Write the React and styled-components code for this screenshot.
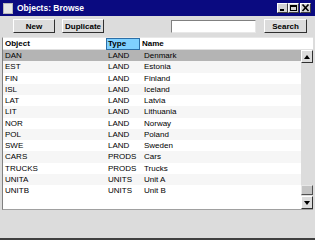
import React from "react";
import styled, { createGlobalStyle } from "styled-components";

const Global = createGlobalStyle`
  html, body { margin: 0; padding: 0; background: #dcdcdc; }
  * { box-sizing: border-box; }
`;

const Window = styled.div`
  width: 315px;
  height: 240px;
  display: flex;
  flex-direction: column;
  background: #dcdcdc;
  border-bottom: 2px solid #404040;
  font-family: "Liberation Sans", Arial, sans-serif;
  font-size: 8px;
  color: #000;
`;

const TitleBar = styled.div`
  height: 16px;
  background: #0a0a80;
  display: flex;
  align-items: center;
  padding: 0 4px 0 3px;
  gap: 4px;
`;

const AppIcon = styled.div`
  width: 10px;
  height: 11px;
  background: #e6e6e6;
  border: 1px solid #b8b8b8;
`;

const Title = styled.div`
  flex: 1;
  color: #fff;
  font-weight: bold;
  font-size: 8.5px;
`;

const TitleButtons = styled.div`
  display: flex;
`;

const TitleButton = styled.div`
  width: 11px;
  height: 10px;
  margin-left: ${(p) => p.ml || 0}px;
  background: #d4d4d4;
  border: 1px solid;
  border-color: #fff #404040 #404040 #fff;
  display: flex;
  align-items: center;
  justify-content: center;
`;

const Toolbar = styled.div`
  height: 20px;
  display: flex;
  align-items: center;
  padding: 0 8px 0 13px;
`;

const Button = styled.div`
  width: ${(p) => p.w}px;
  height: 14px;
  margin-right: ${(p) => p.mr || 0}px;
  background: #dcdcdc;
  border: 1px solid;
  border-color: #fff #303030 #303030 #fff;
  display: flex;
  align-items: center;
  justify-content: center;
  font-weight: bold;
  font-size: 8px;
`;

const SearchField = styled.div`
  width: 85px;
  height: 13px;
  background: #fff;
  border: 1px solid;
  border-color: #808080 #e8e8e8 #e8e8e8 #808080;
  margin: 0 8px 0 auto;
`;

const ListPanel = styled.div`
  margin: 1px 2px 0 2px;
  height: 173px;
  display: flex;
  flex-direction: column;
  background: #fff;
  border-left: 1px solid #808080;
  border-bottom: 1px solid #a0a0a0;
  border-top: 1px solid #e8e8e8;
  overflow: hidden;
`;

const HeaderRow = styled.div`
  display: flex;
  height: 12px;
  align-items: center;
  font-weight: bold;
  font-size: 8px;
  border-bottom: 1px solid #e0e0e0;
`;

const HeadCell = styled.div`
  width: ${(p) => p.w}px;
  height: 12px;
  padding-left: 2px;
  line-height: 11px;
  ${(p) => p.active && `background: #7fd0ff; border: 1px solid #2b6fa8; padding-left: 1px; line-height: 9px;`}
`;

const Body = styled.div`
  flex: 1;
  display: flex;
`;

const Rows = styled.div`
  flex: 1;
`;

const Row = styled.div`
  display: flex;
  height: 11.25px;
  align-items: center;
  background: ${(p) => (p.selected ? "#b4b4b4" : p.odd ? "#f6f6f6" : "#fff")};
  font-size: 8px;
`;

const Cell = styled.div`
  width: ${(p) => p.w}px;
  padding-left: ${(p) => p.pl || 2}px;
  white-space: nowrap;
`;

const Scrollbar = styled.div`
  width: 12px;
  display: flex;
  flex-direction: column;
  background: #dcdcdc;
`;

const ArrowButton = styled.div`
  height: 13px;
  background: #dcdcdc;
  border: 1px solid;
  border-color: #fff #303030 #303030 #fff;
  display: flex;
  align-items: center;
  justify-content: center;
`;

const Track = styled.div`
  flex: 1;
  display: flex;
  flex-direction: column;
  justify-content: flex-end;
`;

const Thumb = styled.div`
  height: 10px;
  margin-bottom: 1px;
  background: #c4c4c4;
  border: 1px solid;
  border-color: #e8e8e8 #505050 #505050 #e8e8e8;
`;

const Footer = styled.div`
  flex: 1;
`;

const data = [
  ["DAN", "LAND", "Denmark"],
  ["EST", "LAND", "Estonia"],
  ["FIN", "LAND", "Finland"],
  ["ISL", "LAND", "Iceland"],
  ["LAT", "LAND", "Latvia"],
  ["LIT", "LAND", "Lithuania"],
  ["NOR", "LAND", "Norway"],
  ["POL", "LAND", "Poland"],
  ["SWE", "LAND", "Sweden"],
  ["CARS", "PRODS", "Cars"],
  ["TRUCKS", "PRODS", "Trucks"],
  ["UNITA", "UNITS", "Unit A"],
  ["UNITB", "UNITS", "Unit B"],
];

const Tri = ({ up }) => (
  <svg width="6" height="4" viewBox="0 0 6 4">
    <polygon points={up ? "0,4 6,4 3,0" : "0,0 6,0 3,4"} fill="#000" />
  </svg>
);

const App = () => (
  <>
    <Global />
    <Window>
      <TitleBar>
        <AppIcon />
        <Title>Objects: Browse</Title>
        <TitleButtons>
          <TitleButton>
            <svg width="9" height="8" viewBox="0 0 9 8">
              <rect x="2" y="5" width="4" height="2" fill="#000" />
            </svg>
          </TitleButton>
          <TitleButton>
            <svg width="9" height="8" viewBox="0 0 9 8">
              <rect x="1.5" y="1.5" width="6" height="5" fill="none" stroke="#000" />
              <rect x="1" y="1" width="7" height="2" fill="#000" />
            </svg>
          </TitleButton>
          <TitleButton ml={1}>
            <svg width="9" height="8" viewBox="0 0 9 8">
              <path d="M1.5 0.5 L7.5 7 M7.5 0.5 L1.5 7" stroke="#000" strokeWidth="1.6" />
            </svg>
          </TitleButton>
        </TitleButtons>
      </TitleBar>
      <Toolbar>
        <Button w={42} mr={7}>New</Button>
        <Button w={42}>Duplicate</Button>
        <SearchField />
        <Button w={43}>Search</Button>
      </Toolbar>
      <ListPanel>
        <HeaderRow>
          <HeadCell w={103}>Object</HeadCell>
          <HeadCell w={34} active>Type</HeadCell>
          <HeadCell w={100}>Name</HeadCell>
        </HeaderRow>
        <Body>
          <Rows>
            {data.map((r, i) => (
              <Row key={r[0]} selected={i === 0} odd={i % 2 === 1}>
                <Cell w={103}>{r[0]}</Cell>
                <Cell w={34}>{r[1]}</Cell>
                <Cell w={120} pl={4}>{r[2]}</Cell>
              </Row>
            ))}
          </Rows>
          <Scrollbar>
            <ArrowButton><Tri up /></ArrowButton>
            <Track>
              <Thumb />
            </Track>
            <ArrowButton><Tri /></ArrowButton>
          </Scrollbar>
        </Body>
      </ListPanel>
      <Footer />
    </Window>
  </>
);

export default App;
